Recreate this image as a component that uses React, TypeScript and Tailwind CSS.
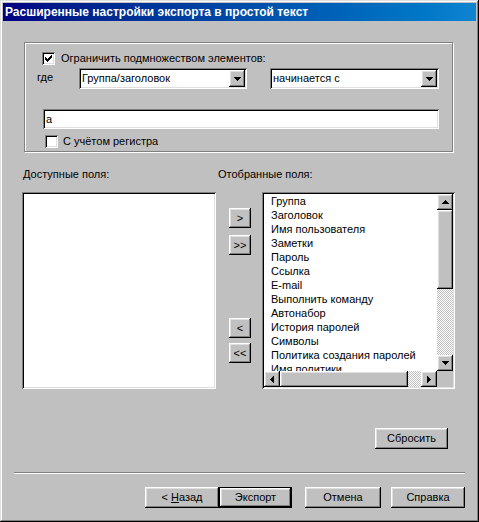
import React from "react";

const raised =
  "shadow-[inset_-1px_-1px_#000,inset_1px_1px_#fff,inset_-2px_-2px_#808080,inset_2px_2px_#dfdfdf]";
const sunken =
  "shadow-[inset_1px_1px_#808080,inset_-1px_-1px_#fff,inset_2px_2px_#000,inset_-2px_-2px_#dfdfdf]";
const dither =
  "bg-[repeating-conic-gradient(#c0c0c0_0_25%,#ffffff_0_50%)] bg-size-[2px_2px]";

function Tri({ dir }: { dir: "up" | "down" | "left" | "right" }) {
  const pts: Record<string, string> = {
    up: "3,0 0,3 7,3 4,0",
    down: "0,0 7,0 3.5,4",
    left: "4,0 4,7 0,3.5",
    right: "0,0 0,7 4,3.5",
  };
  const vertical = dir === "up" || dir === "down";
  const w = vertical ? 7 : 4;
  const h = vertical ? 4 : 7;
  const p =
    dir === "up"
      ? "M3 0h1v1h1v1h1v1h1v1H0V3h1V2h1V1h1z"
      : dir === "down"
      ? "M0 0h7v1H6v1H5v1H4v1H3V3H2V2H1V1H0z"
      : dir === "left"
      ? "M3 0h1v7H3V6H2V5H1V4H0V3h1V2h1V1h1z"
      : "M0 0h1v1h1v1h1v1h1v1H3v1H2v1H1v1H0z";
  void pts;
  return (
    <svg width={w} height={h} viewBox={`0 0 ${w} ${h}`} shapeRendering="crispEdges">
      <path d={p} fill="#000" />
    </svg>
  );
}

function Check({ checked }: { checked?: boolean }) {
  return (
    <div className={`w-[13px] h-[13px] bg-white ${sunken} flex items-center justify-center shrink-0`}>
      {checked && (
        <svg width="7" height="7" viewBox="0 0 7 7" shapeRendering="crispEdges">
          <path d="M6 0h1v3H6v1H5v1H4v1H3v1H2V6H1V5H0V2h1v1h1v1h1V3h1V2h1V1h1z" fill="#000" />
        </svg>
      )}
    </div>
  );
}

function Btn({
  children,
  className = "",
  def,
}: {
  children: React.ReactNode;
  className?: string;
  def?: boolean;
}) {
  if (def) {
    return (
      <div className={`border border-black ${className} flex`}>
        <div className={`flex-1 flex items-center justify-center bg-[#c0c0c0] ${raised}`}>{children}</div>
      </div>
    );
  }
  return (
    <div className={`flex items-center justify-center bg-[#c0c0c0] ${raised} ${className}`}>{children}</div>
  );
}

function Combo({ text, w }: { text: string; w: string }) {
  return (
    <div className={`${w} h-[21px] bg-white ${sunken} flex items-center p-[2px] shrink-0`}>
      <div className="flex-1 pl-[1px] leading-[13px]">{text}</div>
      <div className={`w-[16px] h-[17px] bg-[#c0c0c0] ${raised} flex items-center justify-center`}>
        <Tri dir="down" />
      </div>
    </div>
  );
}

const items = [
  "Группа",
  "Заголовок",
  "Имя пользователя",
  "Заметки",
  "Пароль",
  "Ссылка",
  "E-mail",
  "Выполнить команду",
  "Автонабор",
  "История паролей",
  "Символы",
  "Политика создания паролей",
  "Имя политики",
];

export default function App() {
  return (
    <div
      className="w-[479px] h-[522px] bg-[#c0c0c0] p-[3px] shadow-[inset_-1px_-1px_#000,inset_1px_1px_#dfdfdf,inset_-2px_-2px_#808080,inset_2px_2px_#fff] text-[11px] text-black overflow-hidden"
      style={{ fontFamily: '"Liberation Sans", Arial, sans-serif' }}
    >
      {/* title bar */}
      <div className="h-[18px] bg-linear-to-r from-[#000080] to-[#1084d0] flex items-center pl-[2px]">
        <span className="text-white font-bold text-[12px] leading-[14px]">
          Расширенные настройки экспорта в простой текст
        </span>
      </div>

      {/* group box */}
      <div className="ml-[21px] mt-[21px] w-[429px] h-[110px] border border-[#808080] shadow-[1px_1px_#fff,inset_1px_1px_#fff] flex flex-col">
        <div className="flex items-center mt-[9px] ml-[17px] h-[13px]">
          <Check checked />
          <span className="ml-[6px] leading-[13px]">Ограничить подмножеством элементов:</span>
        </div>
        <div className="flex items-start mt-[3px] ml-[12px]">
          <span className="w-[42px] mt-[3px] leading-[13px]">где</span>
          <Combo text="Группа/заголовок" w="w-[168px]" />
          <div className="w-[23px]" />
          <Combo text="начинается с" w="w-[169px]" />
        </div>
        <div className={`ml-[18px] mt-[20px] w-[396px] h-[20px] bg-white ${sunken} flex items-center px-[3px]`}>
          <span className="leading-[13px]">a</span>
        </div>
        <div className="flex items-center mt-[6px] ml-[20px] h-[13px]">
          <Check />
          <span className="ml-[5px] leading-[13px]">С учётом регистра</span>
        </div>
      </div>

      {/* labels */}
      <div className="flex mt-[16px] leading-[13px]">
        <span className="ml-[20px] w-[195px]">Доступные поля:</span>
        <span>Отобранные поля:</span>
      </div>

      {/* lists */}
      <div className="flex mt-[11px]">
        <div className={`ml-[19px] w-[194px] h-[197px] bg-white ${sunken}`} />
        <div className="ml-[13px] w-[22px] flex flex-col">
          <Btn className="mt-[16px] h-[20px]">&gt;</Btn>
          <Btn className="mt-[7px] h-[20px]">&gt;&gt;</Btn>
          <Btn className="mt-[63px] h-[20px]">&lt;</Btn>
          <Btn className="mt-[5px] h-[20px]">&lt;&lt;</Btn>
        </div>
        <div className={`ml-[11px] w-[193px] h-[197px] bg-white ${sunken} p-[2px] flex flex-col`}>
          <div className="flex flex-1 min-h-0">
            <div className="flex-1 overflow-hidden pl-[7px] leading-[14px] whitespace-nowrap">
              {items.map((t) => (
                <div key={t} className="h-[14px]">
                  {t}
                </div>
              ))}
            </div>
            <div className={`w-[16px] flex flex-col ${dither}`}>
              <div className={`h-[16px] bg-[#c0c0c0] ${raised} flex items-center justify-center`}>
                <Tri dir="up" />
              </div>
              <div className={`mt-[0px] h-[79px] bg-[#c0c0c0] ${raised}`} />
              <div className="flex-1" />
              <div className={`h-[16px] bg-[#c0c0c0] ${raised} flex items-center justify-center`}>
                <Tri dir="down" />
              </div>
            </div>
          </div>
          <div className="flex h-[16px]">
            <div className={`flex-1 flex ${dither}`}>
              <div className={`w-[16px] bg-[#c0c0c0] ${raised} flex items-center justify-center`}>
                <Tri dir="left" />
              </div>
              <div className={`w-[128px] bg-[#c0c0c0] ${raised}`} />
              <div className="flex-1" />
              <div className={`w-[16px] bg-[#c0c0c0] ${raised} flex items-center justify-center`}>
                <Tri dir="right" />
              </div>
            </div>
            <div className="w-[16px] bg-[#c0c0c0]" />
          </div>
        </div>
      </div>

      {/* reset */}
      <div className="flex mt-[39px]">
        <Btn className="ml-[372px] w-[73px] h-[21px]">Сбросить</Btn>
      </div>

      {/* separator */}
      <div className="ml-[11px] mt-[23px] w-[451px] h-[2px] border-t border-t-[#808080] border-b border-b-white" />

      {/* bottom buttons */}
      <div className="flex mt-[13px]">
        <Btn className="ml-[142px] w-[74px] h-[21px]">
          &lt; <span className="underline ml-[3px]">Н</span>азад
        </Btn>
        <Btn def className="w-[73px] h-[21px]">
          Экспорт
        </Btn>
        <Btn className="ml-[13px] w-[76px] h-[21px]">Отмена</Btn>
        <Btn className="ml-[10px] w-[74px] h-[21px]">Справка</Btn>
      </div>
    </div>
  );
}
